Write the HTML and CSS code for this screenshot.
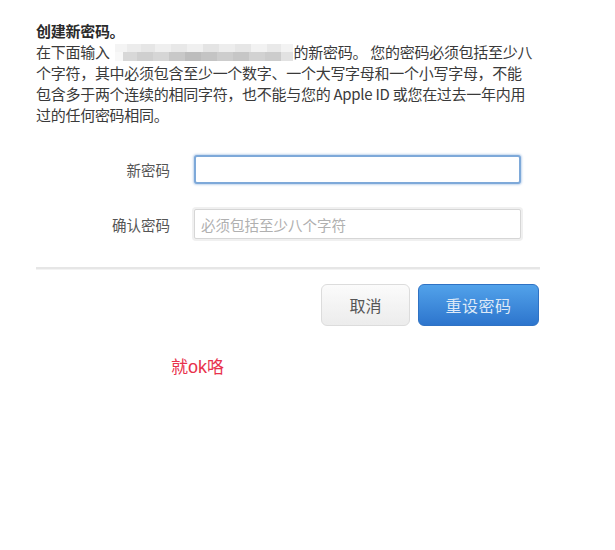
FILE: index.html
```html
<!DOCTYPE html>
<html lang="zh-CN">
<head>
<meta charset="utf-8">
<title>创建新密码</title>
<link rel="stylesheet" href="styles.css">
</head>
<body>
<div class="page">
  <div class="intro">
    <div class="title">创建新密码。</div>
    <div class="line">在下面输入<span class="blur"></span>的新密码。 您的密码必须包括至少八</div>
    <div class="line">个字符，其中必须包含至少一个数字、一个大写字母和一个小写字母，不能</div>
    <div class="line">包含多于两个连续的相同字符，也不能与您的 Apple ID 或您在过去一年内用</div>
    <div class="line">过的任何密码相同。</div>
  </div>

  <div class="form">
    <div class="row">
      <label class="label">新密码</label>
      <div class="input focused"></div>
    </div>
    <div class="row">
      <label class="label">确认密码</label>
      <div class="input"><span class="placeholder">必须包括至少八个字符</span></div>
    </div>
  </div>

  <div class="divider"></div>

  <div class="actions">
    <button class="btn cancel">取消</button>
    <button class="btn primary">重设密码</button>
  </div>

  <div class="note">就<span class="latin">ok</span>咯</div>
</div>
</body>
</html>
```

FILE: styles.css
```css
html, body {
  margin: 0;
  padding: 0;
  background: #ffffff;
}

body {
  font-family: "Noto Sans CJK SC", "Noto Sans", sans-serif;
  color: #333333;
}

.page {
  padding: 20px 0 0 36px;
  width: 504px;
}

.intro {
  font-size: 15px;
  line-height: 21px;
  white-space: nowrap;
  letter-spacing: -0.28px;
}

.title {
  font-weight: 600;
  color: #2a2a2a;
}

.line {
  color: #3a3a3a;
}

.blur {
  display: inline-block;
  width: 178px;
  height: 17px;
  margin-left: 5px;
  margin-right: 1px;
  vertical-align: -3px;
  background-image:
    linear-gradient(to right, #f4f4f4 0 12px, #ececec 12px 26px, #e6e6e6 26px 40px, #efefef 40px 56px, #e8e8e8 56px 72px, #f0f0f0 72px 88px, #e4e4e4 88px 104px, #ededed 104px 120px, #e6e6e6 120px 136px, #f2f2f2 136px 152px, #e9e9e9 152px 166px, #f3f3f3 166px 178px),
    linear-gradient(to right, #f8f8f8 0 8px, #d8d8d8 8px 22px, #cfcfcf 22px 38px, #d6d6d6 38px 54px, #c8c8c8 54px 70px, #bdbdbd 70px 86px, #c4c4c4 86px 102px, #cdcdcd 102px 118px, #c6c6c6 118px 134px, #d2d2d2 134px 150px, #cccccc 150px 166px, #e2e2e2 166px 178px);
  background-size: 178px 8px, 178px 9px;
  background-position: 0 0, 0 8px;
  background-repeat: no-repeat;
}

.form {
  margin-top: 29px;
  display: flex;
  flex-direction: column;
  gap: 25px;
}

.row {
  display: flex;
  align-items: center;
  gap: 24px;
  height: 30px;
}

.label {
  width: 134px;
  text-align: right;
  font-size: 14.5px;
  color: #555555;
}

.input {
  box-sizing: border-box;
  width: 327px;
  height: 30px;
  border: 1px solid #d6d6d6;
  border-radius: 2px;
  box-shadow: 0 0 0 2px #f0f0f0;
  background: #ffffff;
  display: flex;
  align-items: center;
  padding-left: 6px;
}

.input.focused {
  height: 29px;
  border: 2px solid #7ea9d9;
  border-radius: 3px;
  box-shadow: 0 0 2px 1px rgba(120, 165, 215, 0.45);
}

.placeholder {
  font-size: 14.5px;
  color: #b0b0b0;
}

.divider {
  margin-top: 28px;
  height: 2px;
  background: #e6e6e6;
  border-bottom: 1px solid #f3f3f3;
}

.actions {
  margin-top: 14px;
  display: flex;
  justify-content: flex-end;
  gap: 8px;
  padding-right: 1px;
}

.btn {
  font-family: "Noto Sans CJK SC", "Noto Sans", sans-serif;
  font-size: 16px;
  height: 42px;
  border-radius: 6px;
  cursor: pointer;
  padding: 0;
}

.cancel {
  width: 89px;
  color: #555555;
  border: 1px solid #dcdcdc;
  background: linear-gradient(to bottom, #fbfbfb, #ececec);
}

.primary {
  width: 121px;
  color: #dde9f7;
  border: 1px solid #2f72c4;
  background: linear-gradient(to bottom, #52a2ea, #2d75cd);
  letter-spacing: 0.5px;
}

.note {
  margin-top: 30px;
  margin-left: 135px;
  font-size: 17px;
  line-height: 20px;
  color: #e8324c;
}

.latin {
  font-family: "Liberation Sans", sans-serif;
  font-size: 18px;
}
```
